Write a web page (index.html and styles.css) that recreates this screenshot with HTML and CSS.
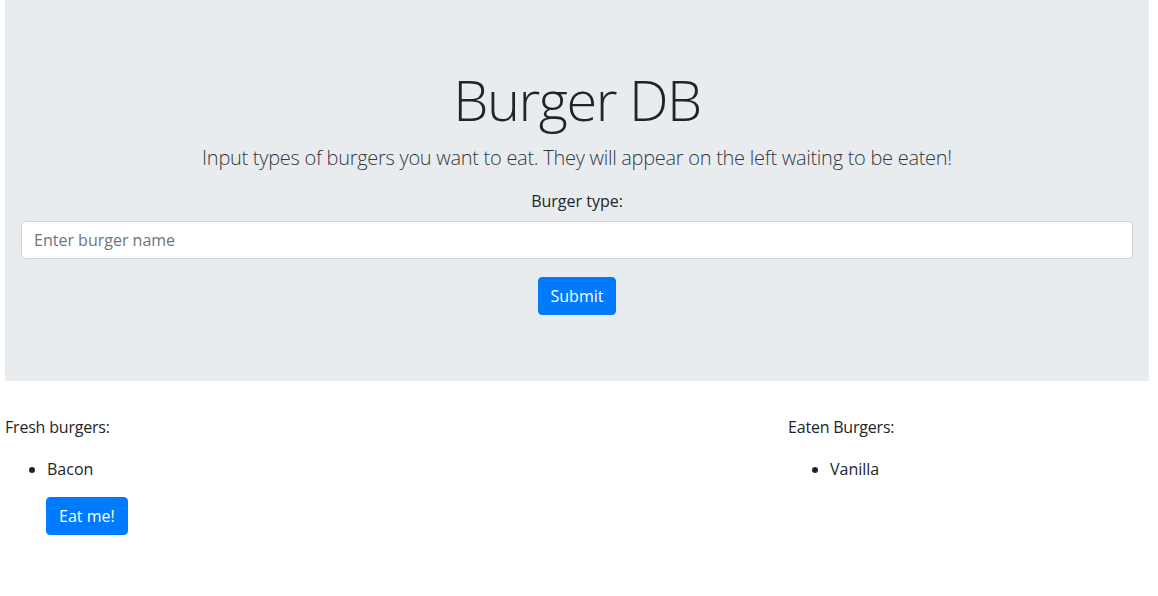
FILE: index.html
```html
<!DOCTYPE html>
<html lang="en">
<head>
<meta charset="utf-8">
<title>Burger DB</title>
<link rel="stylesheet" href="styles.css">
</head>
<body>
<div class="page">
  <div class="jumbotron">
    <h1 class="title">Burger DB</h1>
    <p class="lead">Input types of burgers you want to eat. They will appear on the left waiting to be eaten!</p>
    <form class="burger-form">
      <div class="form-group">
        <label class="form-label" for="burger">Burger type:</label>
        <input class="form-control" id="burger" type="text" placeholder="Enter burger name">
      </div>
      <button type="button" class="btn">Submit</button>
    </form>
  </div>
  <div class="columns">
    <div class="col">
      <p class="col-title">Fresh burgers:</p>
      <ul class="burger-list">
        <li>Bacon
          <div class="eat-wrap"><button type="button" class="btn">Eat me!</button></div>
        </li>
      </ul>
    </div>
    <div class="col">
      <p class="col-title">Eaten Burgers:</p>
      <ul class="burger-list">
        <li>Vanilla</li>
      </ul>
    </div>
  </div>
</div>
</body>
</html>
```
FILE: styles.css
```css
* { box-sizing: border-box; }
html, body { margin: 0; padding: 0; }
body {
  font-family: "Open Sans", "Noto Sans", sans-serif;
  font-size: 16px;
  line-height: 1.5;
  color: #212529;
  background: #fff;
}
.page { padding: 0 9px 0 5px; }
.jumbotron {
  background: #e9ecef;
  padding: 66px 16px 66px;
  text-align: center;
  margin-bottom: 34px;
}
.title {
  margin: 0 0 10px;
  font-size: 56px;
  font-weight: 300;
  line-height: 1.2;
  letter-spacing: -1.5px;
}
.lead {
  margin: 0 0 16px;
  font-size: 20px;
  font-weight: 300;
  line-height: 1.5;
  letter-spacing: -0.28px;
  color: #343a40;
}
.burger-form { margin: 0; }
.form-group { margin-bottom: 18px; }
.form-label {
  display: inline-block;
  margin-bottom: 8px;
}
.form-control {
  display: block;
  width: 100%;
  height: 38px;
  padding: 6px 12px;
  font-family: inherit;
  font-size: 16px;
  line-height: 1.5;
  color: #495057;
  background: #fff;
  border: 1px solid #ced4da;
  border-radius: 4px;
  text-align: left;
}
.form-control::placeholder { color: #6c757d; }
.btn {
  display: inline-block;
  height: 38px;
  padding: 6px 12px;
  font-family: inherit;
  font-size: 16px;
  line-height: 1.5;
  color: #fff;
  background: #007bff;
  border: 1px solid #007bff;
  border-radius: 4px;
}
.columns {
  display: grid;
  grid-template-columns: 783px 1fr;
}
.col-title { margin: 0 0 18px; letter-spacing: -0.2px; }
.burger-list {
  margin: 0;
  padding-left: 42px;
}
.eat-wrap { margin-top: 16px; margin-left: -1px; }
```
